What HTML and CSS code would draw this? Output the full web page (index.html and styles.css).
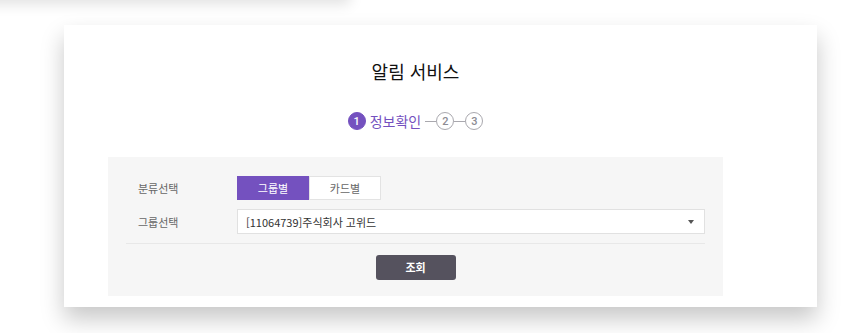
FILE: index.html
```html
<!DOCTYPE html>
<html lang="ko">
<head>
    <meta charset="UTF-8">
    <meta name="viewport" content="width=device-width, initial-scale=1.0">
    <title>알림 서비스</title>
    <link rel="stylesheet" href="styles.css">
</head>
<body>
    <div class="top-menu"></div>

    <div class="modal">
        <h1>알림 서비스</h1>

        <div class="steps">
            <span class="step active"><span class="num">1</span><span class="step-name">정보확인</span></span>
            <span class="line"></span>
            <span class="step"><span class="num">2</span></span>
            <span class="line"></span>
            <span class="step"><span class="num">3</span></span>
        </div>

        <div class="panel">
            <div class="form-row">
                <label>분류선택</label>
                <div class="toggle">
                    <button class="on">그룹별</button>
                    <button>카드별</button>
                </div>
            </div>
            <div class="form-row">
                <label>그룹선택</label>
                <div class="select">
                    <span>[11064739]주식회사 고위드</span>
                    <span class="caret"></span>
                </div>
            </div>
            <div class="actions">
                <button class="btn">조회</button>
            </div>
        </div>
    </div>
</body>
</html>
```

FILE: styles.css
```css
body {
    font-family: "Noto Sans CJK KR", "Noto Sans", sans-serif;
    margin: 0;
    background: #fff;
    color: #222;
    height: 333px;
    overflow: hidden;
    position: relative;
}
.top-menu {
    position: absolute;
    top: -40px;
    left: -20px;
    width: 370px;
    height: 40px;
    background: #fff;
    box-shadow: 0 4px 14px rgba(0, 0, 0, 0.12);
}
.modal {
    margin: 25px 0 0 64px;
    width: 753px;
    height: 282px;
    box-sizing: border-box;
    padding: 33px 94px 0 44px;
    background: #fff;
    box-shadow: 0 12px 22px rgba(0, 0, 0, 0.22);
}
h1 {
    margin: 0;
    font-size: 18px;
    font-weight: 400;
    text-align: center;
    line-height: 26px;
    color: #111;
}
.steps {
    display: flex;
    justify-content: center;
    align-items: center;
    margin-top: 27px;
    height: 20px;
}
.step {
    display: flex;
    align-items: center;
}
.num {
    width: 18px;
    height: 18px;
    box-sizing: border-box;
    border: 1.5px solid #a9a8ae;
    border-radius: 50%;
    display: flex;
    align-items: center;
    justify-content: center;
    font-size: 11px;
    color: #8d8c93;
    font-family: "Roboto", sans-serif;
    font-weight: 500;
}
.step.active .num {
    background: #7451bf;
    border-color: #7451bf;
    color: #fff;
}
.step-name {
    margin: 0 4px 0 4px;
    color: #7451bf;
    font-size: 14px;
}
.line {
    width: 11px;
    height: 1px;
    background: #a9a8ae;
}
.panel {
    margin-top: 26px;
    background: #f6f6f6;
    padding: 19px 18px 18px;
    height: 139px;
    box-sizing: border-box;
}
.form-row {
    display: flex;
    align-items: center;
    margin-bottom: 9px;
}
.form-row label {
    width: 99px;
    padding-left: 12px;
    font-size: 11px;
    color: #666;
}
.toggle {
    display: flex;
}
.toggle button {
    width: 72px;
    height: 24px;
    border: 1px solid #e3e3e3;
    background: #fff;
    font-family: inherit;
    font-size: 11px;
    color: #666;
    padding: 0;
}
.toggle button.on {
    background: #7451bf;
    border-color: #7451bf;
    color: #fff;
}
.select {
    flex: 1;
    height: 25px;
    box-sizing: border-box;
    border: 1px solid #e1e1e1;
    background: #fff;
    display: flex;
    align-items: center;
    justify-content: space-between;
    padding: 0 10px 0 8px;
    font-size: 11px;
    color: #333;
}
.caret {
    width: 0;
    height: 0;
    border-left: 3.5px solid transparent;
    border-right: 3.5px solid transparent;
    border-top: 4px solid #555;
}
.actions {
    border-top: 1px solid #e8e8e8;
    padding-top: 9px;
    text-align: center;
}
.btn {
    width: 80px;
    height: 25px;
    background: #55525e;
    color: #fff;
    border: none;
    border-radius: 3px;
    font-family: inherit;
    font-size: 11px;
    font-weight: 700;
    padding: 0;
}
```
